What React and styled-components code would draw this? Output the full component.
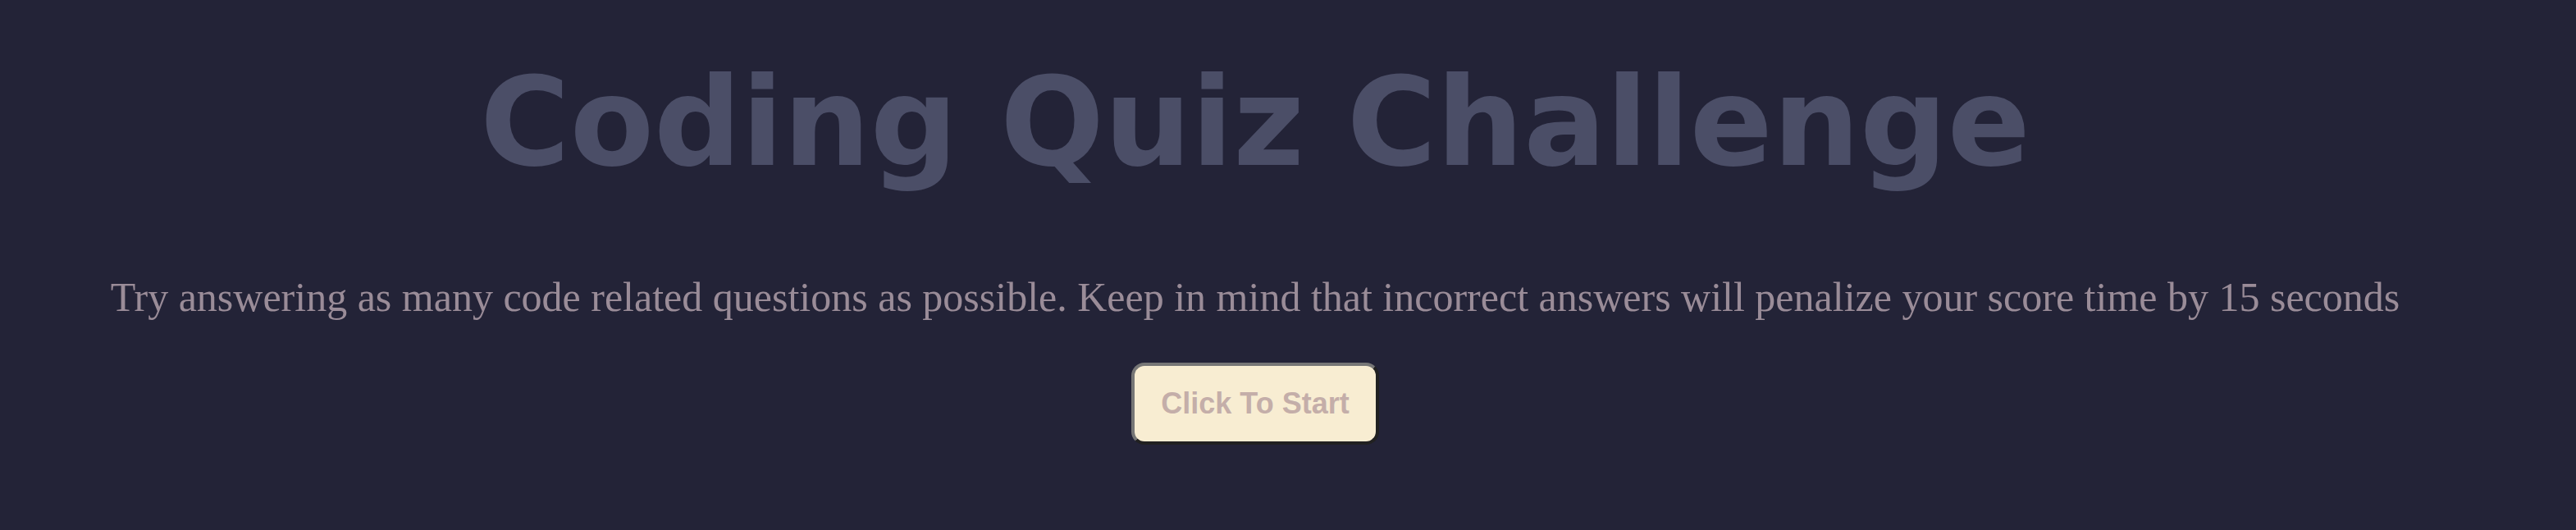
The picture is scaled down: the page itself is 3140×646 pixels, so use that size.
import React from "react";
import styled, { createGlobalStyle } from "styled-components";

const GlobalStyle = createGlobalStyle`
  body {
    margin: 0;
    background: #232337;
  }
`;

const Page = styled.main`
  display: flex;
  flex-direction: column;
  align-items: center;
  padding: 58px 80px 0 0;
  text-align: center;
`;

const Title = styled.h1`
  margin: 0;
  color: #4b4e67;
  font: bold 149px/184px "DejaVu Sans", Verdana, sans-serif;
`;

const Intro = styled.p`
  margin: 90px 0 0;
  color: #9a8c98;
  font: 50px/60px "Liberation Serif", "Times New Roman", serif;
`;

const StartButton = styled.button`
  margin-top: 50px;
  padding: 24px 32px;
  border: 4px solid;
  border-color: #767676 #212121 #212121 #767676;
  border-radius: 16px;
  background: #f8edd2;
  color: #c4aea9;
  font: bold 36px/44px "Liberation Sans", Arial, sans-serif;
`;

export default function App() {
  return (
    <>
      <GlobalStyle />
      <Page>
        <Title>Coding Quiz Challenge</Title>
        <Intro>
          Try answering as many code related questions as possible. Keep in mind
          that incorrect answers will penalize your score time by 15 seconds
        </Intro>
        <StartButton type="button">Click To Start</StartButton>
      </Page>
    </>
  );
}
